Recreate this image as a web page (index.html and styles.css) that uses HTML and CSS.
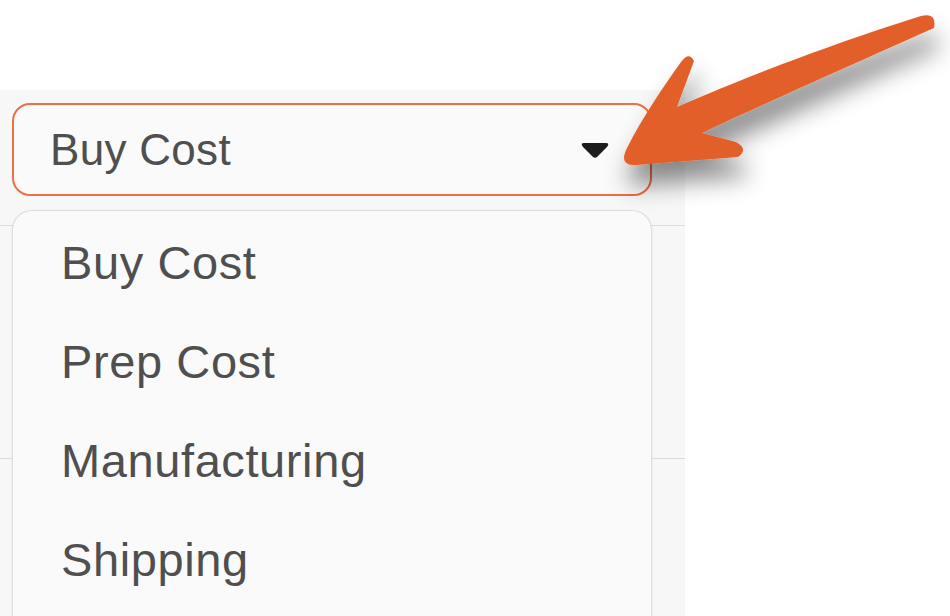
FILE: index.html
```html
<!DOCTYPE html>
<html lang="en">
<head>
    <meta charset="UTF-8">
    <meta name="viewport" content="width=device-width, initial-scale=1.0">
    <title>Cost Type</title>
    <link rel="stylesheet" href="styles.css">
</head>
<body>
    <div class="top-space"></div>
    <div class="panel">
        <div class="select-row">
            <div class="select">
                <span class="select-value">Buy Cost</span>
                <svg class="caret" width="30" height="18" viewBox="0 0 30 18">
                    <path d="M4 2 H26 Q30 2 27 6 L17.5 15.5 Q15 18 12.5 15.5 L3 6 Q0 2 4 2 Z" fill="#1c1c1c"/>
                </svg>
            </div>
        </div>
        <div class="row"></div>
        <div class="row"></div>

        <ul class="menu">
            <li>Buy Cost</li>
            <li>Prep Cost</li>
            <li>Manufacturing</li>
            <li>Shipping</li>
        </ul>
    </div>

    <!-- annotation arrow -->
    <svg class="pointer" width="950" height="616" viewBox="0 0 950 616">
        <defs>
            <filter id="shadow" x="-20%" y="-20%" width="140%" height="170%">
                <feDropShadow dx="4" dy="20" stdDeviation="12" flood-color="#000" flood-opacity="0.45"/>
            </filter>
        </defs>
        <path filter="url(#shadow)" fill="#e35f2a"
              d="M627 148
                 C642 118 664 86 681 62
                 Q689 51 694 61
                 L677 107
                 C752 74 850 38 921 16
                 Q937 12 934 28
                 C858 62 770 101 702 133
                 L736 142
                 Q749 149 738 157
                 L636 165
                 Q618 166 627 148 Z"/>
    </svg>
</body>
</html>
```

FILE: styles.css
```css
body {
    margin: 0;
    background-color: #fff;
    font-family: "Liberation Sans", Arial, sans-serif;
    overflow: hidden;
}
.top-space {
    height: 90px;
}
.panel {
    position: relative;
    width: 685px;
    height: 526px;
    overflow: hidden;
    background-color: #f7f7f7;
}
.select-row {
    height: 135px;
    padding: 13px 0 0 12px;
    box-sizing: border-box;
}
.select {
    width: 640px;
    height: 93px;
    box-sizing: border-box;
    border: 2px solid #ec6f45;
    border-radius: 18px;
    background-color: #fafafa;
    display: flex;
    align-items: center;
    justify-content: space-between;
    padding: 0 40px 0 36px;
}
.select-value {
    font-size: 44px;
    letter-spacing: 0.3px;
    color: #4f4f4f;
}
.caret {
    display: block;
}
.row {
    height: 232px;
    border-top: 1px solid #dcdcdc;
}
.menu {
    position: absolute;
    top: 120px;
    left: 12px;
    width: 640px;
    height: 406px;
    box-sizing: border-box;
    margin: 0;
    padding: 2px 0 0 48px;
    list-style: none;
    background-color: #fafafa;
    border: 1px solid #dcdcdc;
    border-bottom: none;
    border-radius: 20px 20px 0 0;
    box-shadow: 0 1px 3px rgba(0, 0, 0, 0.06);
}
.menu li {
    font-size: 47px;
    letter-spacing: 0.6px;
    line-height: 99px;
    color: #4f4f4f;
}
.pointer {
    position: absolute;
    top: 0;
    left: 0;
    pointer-events: none;
}
```
